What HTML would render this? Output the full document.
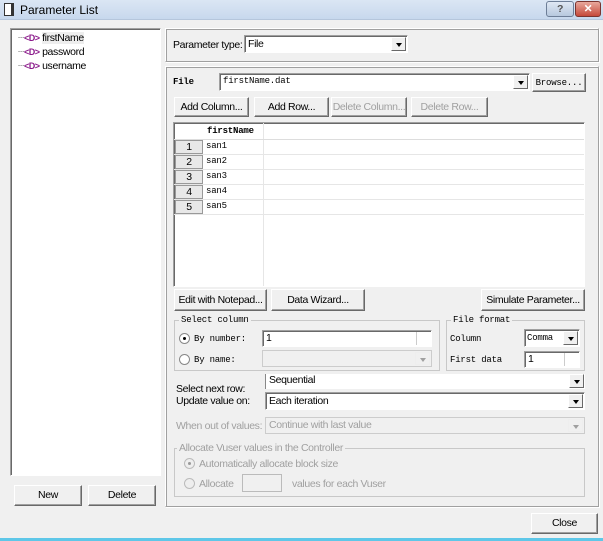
<!DOCTYPE html><html><head><style>
*{box-sizing:border-box;margin:0;padding:0;white-space:nowrap}
body{width:603px;height:541px;background:#f0f0f0;font-family:"Liberation Sans",sans-serif;font-size:10.5px;letter-spacing:-0.35px;color:#000;position:relative;overflow:hidden}
.a{position:absolute}
.mono{font-family:"Liberation Mono","Noto Sans CJK SC",monospace;font-size:9px;letter-spacing:-0.2px}
.btn{position:absolute;background:#f0f0f0;border:1px solid;border-color:#fff #696969 #696969 #fff;box-shadow:inset -1px -1px 0 #a0a0a0;text-align:center;line-height:18px;overflow:hidden}
.dis{color:#a0a0a0}
.sunk{position:absolute;background:#fff;border:1px solid;border-color:#a0a0a0 #fff #fff #a0a0a0;box-shadow:inset 1px 1px 0 #696969}
.grp{position:absolute;border:1px solid;border-color:#fff #a0a0a0 #a0a0a0 #fff;box-shadow:inset 1px 1px 0 #a0a0a0, 1px 1px 0 #fff}
.fs{position:absolute;border:1px solid #c8c8c8}
.lg{position:absolute;background:#f0f0f0;padding:0 2px;top:-7px;left:4px;line-height:12px}
.dd{position:absolute;right:1px;top:1px;width:15px;bottom:1px;background:#f0f0f0;border:1px solid;border-color:#fff #696969 #696969 #fff}
.dd:after{content:"";position:absolute;left:4px;top:5px;border:3px solid transparent;border-top:4px solid #000}
.dd.g:after{border-top-color:#a0a0a0}
.row{position:absolute;left:0;right:0;height:15px;border-bottom:1px solid #e6e6e6}
.rn{position:absolute;left:1px;width:28px;height:14px;background:#e8e8e8;border:1px solid #999;text-align:center;line-height:12px}
.rad{position:absolute;width:11px;height:11px;border-radius:50%;background:#fff;border:1px solid #888}
.tag{color:#8b1a8b;font-size:9px;font-weight:bold;letter-spacing:-0.5px}
</style></head><body>
<div class="a" style="left:0;top:0;width:603px;height:20px;background:linear-gradient(#dbe6f4,#c7d8ed);border-bottom:1px solid #b5c6dc"></div>
<div class="a" style="left:4px;top:3px;width:10px;height:13px;background:#fff;border:1px solid #333;border-right-width:3px"></div>
<div class="a" style="left:20px;top:3px;font-size:12px;letter-spacing:0">Parameter List</div>
<div class="a" style="left:546px;top:1px;width:28px;height:16px;border:1px solid #6d7e97;border-radius:3px;background:linear-gradient(#dfe8f4,#b7c8de);text-align:center;color:#555;font-weight:bold;line-height:14px">?</div>
<div class="a" style="left:575px;top:1px;width:26px;height:16px;border:1px solid #7a3430;border-radius:3px;background:linear-gradient(#e8a89c,#c5493a);text-align:center;color:#fff;font-weight:bold;line-height:14px">✕</div>
<div class="a" style="left:0;top:538px;width:603px;height:3px;background:#5ec7e8"></div>

<div class="sunk" style="left:10px;top:28px;width:151px;height:448px"></div>
<div class="a" style="left:18px;top:31px;line-height:14px">
<div><span style="color:#999">┄</span><span class="tag">&lt;D&gt;</span> <span style="background:#eee">firstName</span></div>
<div><span style="color:#999">┄</span><span class="tag">&lt;D&gt;</span> password</div>
<div><span style="color:#999">┄</span><span class="tag">&lt;D&gt;</span> username</div></div>
<div class="btn" style="left:14px;top:485px;width:68px;height:21px">New</div>
<div class="btn" style="left:88px;top:485px;width:68px;height:21px">Delete</div>

<div class="grp" style="left:165px;top:28px;width:434px;height:34px"></div>
<div class="a" style="left:173px;top:39px">Parameter type:</div>
<div class="sunk" style="left:244px;top:35px;width:164px;height:18px"><span class="a" style="left:3px;top:2px">File</span><div class="dd"></div></div>

<div class="grp" style="left:165px;top:66px;width:434px;height:441px"></div>
<div class="a mono" style="left:173px;top:77px;font-weight:bold">File</div>
<div class="sunk" style="left:219px;top:73px;width:311px;height:18px"><span class="a mono" style="left:3px;top:2px">firstName.dat</span><div class="dd"></div></div>
<div class="btn mono" style="left:532px;top:73px;width:54px;height:19px">Browse...</div>
<div class="btn" style="left:174px;top:97px;width:75px;height:20px">Add Column...</div>
<div class="btn" style="left:254px;top:97px;width:75px;height:20px">Add Row...</div>
<div class="btn dis" style="left:331px;top:97px;width:76px;height:20px">Delete Column...</div>
<div class="btn dis" style="left:411px;top:97px;width:77px;height:20px">Delete Row...</div>

<div class="sunk" style="left:173px;top:122px;width:412px;height:165px;overflow:hidden">
<div class="a" style="left:89px;top:0;width:1px;height:165px;background:#e6e6e6"></div>
<div class="row" style="top:1px;height:16px;border-bottom:1px solid #ddd"><span class="a mono" style="left:33px;top:2px;font-weight:bold">firstName</span></div>
<div class="row" style="top:17px"><div class="rn">1</div><span class="a mono" style="left:32px;top:1px">san1</span></div>
<div class="row" style="top:32px"><div class="rn">2</div><span class="a mono" style="left:32px;top:1px">san2</span></div>
<div class="row" style="top:47px"><div class="rn">3</div><span class="a mono" style="left:32px;top:1px">san3</span></div>
<div class="row" style="top:62px"><div class="rn">4</div><span class="a mono" style="left:32px;top:1px">san4</span></div>
<div class="row" style="top:77px"><div class="rn">5</div><span class="a mono" style="left:32px;top:1px">san5</span></div>
</div>

<div class="btn" style="left:174px;top:289px;width:93px;height:22px;line-height:20px">Edit with Notepad...</div>
<div class="btn" style="left:271px;top:289px;width:94px;height:22px;line-height:20px">Data Wizard...</div>
<div class="btn" style="left:481px;top:289px;width:104px;height:22px;line-height:20px">Simulate Parameter...</div>

<div class="fs" style="left:174px;top:320px;width:266px;height:51px"><span class="lg mono">Select column</span></div>
<div class="rad" style="left:179px;top:333px"><div class="a" style="left:3px;top:3px;width:3px;height:3px;background:#000;border-radius:50%"></div></div>
<div class="a mono" style="left:194px;top:334px">By number:</div>
<div class="sunk" style="left:262px;top:330px;width:170px;height:17px"><span class="a" style="left:3px;top:1px">1</span><div class="a" style="right:1px;top:1px;width:14px;height:13px;border-left:1px solid #ccc"></div></div>
<div class="rad" style="left:179px;top:354px"></div>
<div class="a mono" style="left:194px;top:355px">By name:</div>
<div class="a" style="left:262px;top:350px;width:170px;height:17px;border:1px solid #ccc;background:#f0f0f0"><div class="dd g" style="border-color:#eee"></div></div>

<div class="fs" style="left:446px;top:320px;width:139px;height:51px"><span class="lg mono">File format</span></div>
<div class="a mono" style="left:450px;top:334px">Column</div>
<div class="sunk" style="left:524px;top:329px;width:56px;height:18px"><span class="a mono" style="left:2px;top:3px">Comma</span><div class="dd"></div></div>
<div class="a mono" style="left:450px;top:355px;">First data</div>
<div class="sunk" style="left:524px;top:351px;width:56px;height:17px"><span class="a" style="left:3px;top:1px">1</span><div class="a" style="right:1px;top:1px;width:14px;height:13px;border-left:1px solid #ccc"></div></div>

<div class="a" style="left:176px;top:383px;line-height:12px">Select next row:<br>Update value on:</div>
<div class="a" style="left:265px;top:374px;width:320px;height:15px;background:#fff;border-left:1px solid #888"><span class="a" style="left:3px;top:0">Sequential</span><div class="dd" style="top:0"></div></div>
<div class="sunk" style="left:265px;top:392px;width:320px;height:18px"><span class="a" style="left:3px;top:2px">Each iteration</span><div class="dd"></div></div>
<div class="a dis" style="left:176px;top:420px">When out of values:</div>
<div class="a" style="left:265px;top:417px;width:320px;height:17px;border:1px solid #ccc"><span class="a dis" style="left:3px;top:1px">Continue with last value</span><div class="dd g" style="border-color:#eee"></div></div>

<div class="fs" style="left:174px;top:448px;width:411px;height:49px"><span class="lg dis" style="left:2px">Allocate Vuser values in the Controller</span></div>
<div class="rad" style="left:184px;top:458px;border-color:#bbb;background:#eee"><div class="a" style="left:3px;top:3px;width:3px;height:3px;background:#999;border-radius:50%"></div></div>
<div class="a dis" style="left:199px;top:458px">Automatically allocate block size</div>
<div class="rad" style="left:184px;top:478px;border-color:#bbb;background:#eee"></div>
<div class="a dis" style="left:199px;top:478px">Allocate</div>
<div class="a" style="left:242px;top:474px;width:40px;height:18px;border:1px solid #bbb"></div>
<div class="a dis" style="left:292px;top:478px">values for each Vuser</div>

<div class="btn" style="left:531px;top:513px;width:67px;height:21px">Close</div>
</body></html>
